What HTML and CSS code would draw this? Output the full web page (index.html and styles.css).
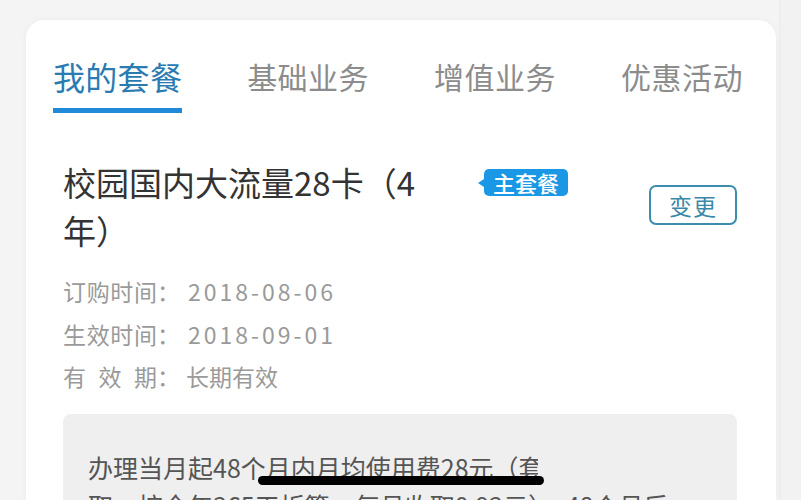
FILE: index.html
```html
<!DOCTYPE html>
<html lang="zh-CN">
<head>
<meta charset="utf-8">
<link rel="stylesheet" href="styles.css">
</head>
<body>
<div class="page">
  <div class="card">
    <nav class="tabs">
      <div class="tab active">我的套餐<span class="bar"></span></div>
      <div class="tab">基础业务</div>
      <div class="tab">增值业务</div>
      <div class="tab">优惠活动</div>
    </nav>
    <div class="plan-head">
      <div class="plan-title">校园国内大流量28卡（4年）</div>
      <span class="badge">主套餐</span>
      <button class="change-btn">变更</button>
    </div>
    <div class="info">
      <div class="info-row"><span class="label">订购时间</span>：<span class="num">2018-08-06</span></div>
      <div class="info-row"><span class="label">生效时间</span>：<span class="num">2018-09-01</span></div>
      <div class="info-row"><span class="label">有 效 期</span>：<span class="val">长期有效</span></div>
    </div>
    <div class="desc">
      <div class="desc-line first">办理当月起48个月内月均使用费28元（套</div>
      <div class="desc-line">取，按全年365天折算，每月收取0.92元），48个月后</div>
    </div>
  </div>
  <div class="home-bar"></div>
</div>
</body>
</html>
```
FILE: styles.css
```css
html, body {
  margin: 0;
  padding: 0;
  background: #f3f3f3;
  overflow: hidden;
}
body {
  font-family: "Noto Sans CJK SC", "Noto Sans", sans-serif;
  width: 801px;
  height: 500px;
}
.page {
  position: relative;
  width: 801px;
  height: 500px;
  padding: 20px 0 0 26px;
  box-sizing: border-box;
  background: linear-gradient(to right, #f4f4f4 0, #f4f4f4 779px, #ececec 779px, #f2f2f2 782px);
}
.card {
  width: 750px;
  height: 480px;
  background: #fff;
  border-radius: 18px 18px 0 0;
  box-shadow: 0 0 6px rgba(0,0,0,0.04);
  padding: 33px 39px 0 27px;
  box-sizing: border-box;
  overflow: hidden;
}
.tabs {
  display: flex;
  justify-content: space-between;
  align-items: flex-start;
  margin-right: -6px;
}
.tab {
  flex-shrink: 0;
  white-space: nowrap;
  font-size: 30px;
  line-height: 46px;
  color: #8c8c8c;
  letter-spacing: 0.5px;
}
.tab.active {
  font-size: 32px;
  color: #2a7bb2;
  display: flex;
  flex-direction: column;
  letter-spacing: 0.3px;
}
.tab .bar {
  display: block;
  height: 5px;
  background: #1e8ad8;
  margin-top: 9px;
}
.plan-head {
  display: flex;
  align-items: center;
  margin-top: 45px;
  padding-left: 10px;
}
.plan-title {
  width: 380px;
  flex-shrink: 0;
  font-size: 33px;
  line-height: 48px;
  color: #333;
}
.badge {
  position: relative;
  align-self: flex-start;
  margin-top: 11px;
  margin-left: 41px;
  background: #1a98e6;
  color: #fff;
  font-size: 22px;
  line-height: 27px;
  height: 27px;
  padding: 0 9px;
  border-radius: 5px;
  font-weight: 500;
}
.badge::before {
  content: "";
  position: absolute;
  left: -6px;
  top: 10px;
  border-style: solid;
  border-width: 4px 6px 4px 0;
  border-color: transparent #1a98e6 transparent transparent;
}
.change-btn {
  margin-left: auto;
  margin-top: -3px;
  width: 88px;
  height: 40px;
  border: 2px solid #3f8dae;
  border-radius: 7px;
  background: #fff;
  color: #3a88a8;
  font-family: inherit;
  font-size: 23px;
  line-height: 36px;
  padding: 0;
  letter-spacing: 1px;
}
.info {
  margin-top: 16px;
  padding-left: 10px;
}
.info-row {
  font-size: 23px;
  line-height: 42.5px;
  color: #9a9a9a;
  white-space: nowrap;
}
.info-row .label {
  display: inline-block;
  width: 94px;
  text-align: justify;
  text-align-last: justify;
}
.info-row .num {
  letter-spacing: 3px;
  margin-left: 8px;
}
.info-row .val {
  margin-left: 6px;
}
.desc {
  margin: 16px 0 0 10px;
  background: #efefef;
  border-radius: 8px 8px 0 0;
  padding: 34px 25px 0;
  height: 100px;
}
.desc-line {
  font-size: 25px;
  line-height: 38px;
  color: #555;
  white-space: nowrap;
  overflow: hidden;
}
.desc-line.first {
  width: 450px;
}
.home-bar {
  position: absolute;
  left: 258px;
  top: 476px;
  width: 286px;
  height: 9px;
  border-radius: 5px;
  background: #000;
}
```
